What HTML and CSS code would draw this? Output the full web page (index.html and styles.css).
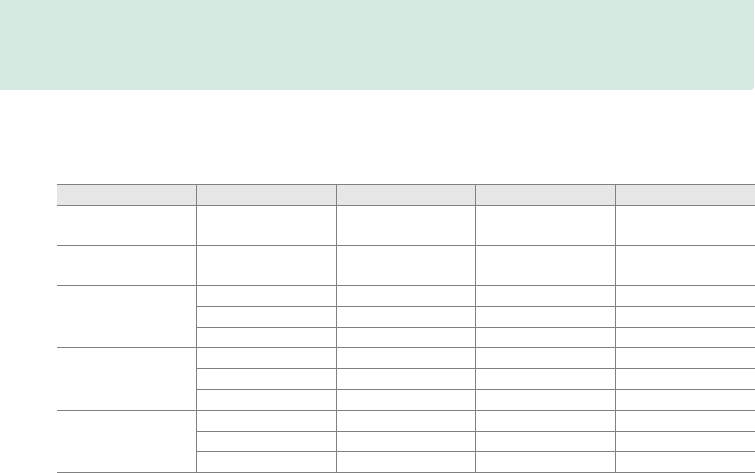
FILE: index.html
```html
<!DOCTYPE html>
<html>
<head>
<meta charset="utf-8">
<link rel="stylesheet" href="styles.css">
</head>
<body>
<div class="banner"></div>
<table class="grid">
  <tr class="head"><th></th><th></th><th></th><th></th><th></th></tr>
  <tr class="tall"><td></td><td></td><td></td><td></td><td></td></tr>
  <tr class="tall"><td></td><td></td><td></td><td></td><td></td></tr>
  <tr class="r"><td rowspan="3"></td><td></td><td></td><td></td><td></td></tr>
  <tr class="r"><td></td><td></td><td></td><td></td></tr>
  <tr class="s"><td></td><td></td><td></td><td></td></tr>
  <tr class="r"><td rowspan="3"></td><td></td><td></td><td></td><td></td></tr>
  <tr class="r"><td></td><td></td><td></td><td></td></tr>
  <tr class="r"><td></td><td></td><td></td><td></td></tr>
  <tr class="r"><td rowspan="3"></td><td></td><td></td><td></td><td></td></tr>
  <tr class="s"><td></td><td></td><td></td><td></td></tr>
  <tr class="r"><td></td><td></td><td></td><td></td></tr>
</table>
</body>
</html>
```
FILE: styles.css
```css
html, body {
  margin: 0;
  padding: 0;
  background: #ffffff;
  font-family: "Liberation Sans", Arial, sans-serif;
  overflow: hidden;
}
.banner {
  width: 754px;
  height: 90px;
  background: #d6ebdf;
  border-bottom-right-radius: 4px;
}
.grid {
  margin: 94px 0 0 57px;
  width: 698px;
  border-collapse: collapse;
  table-layout: fixed;
}
.grid th, .grid td {
  padding: 0;
  border-top: 1px solid #808080;
  border-bottom: 1px solid #808080;
  border-left: 1px solid #808080;
  border-right: none;
}
.grid tr > :first-child {
  border-left: none;
}
.grid tr.r > td[rowspan] {
  border-left: none;
}
.grid tr.r > td:not([rowspan]):first-child,
.grid tr.s > td:first-child {
  border-left: 1px solid #808080;
}
.grid th {
  background: #e6e6e6;
}
.head { height: 21px; }
.tall { height: 40px; }
.r { height: 21px; }
.s { height: 20px; }
```
